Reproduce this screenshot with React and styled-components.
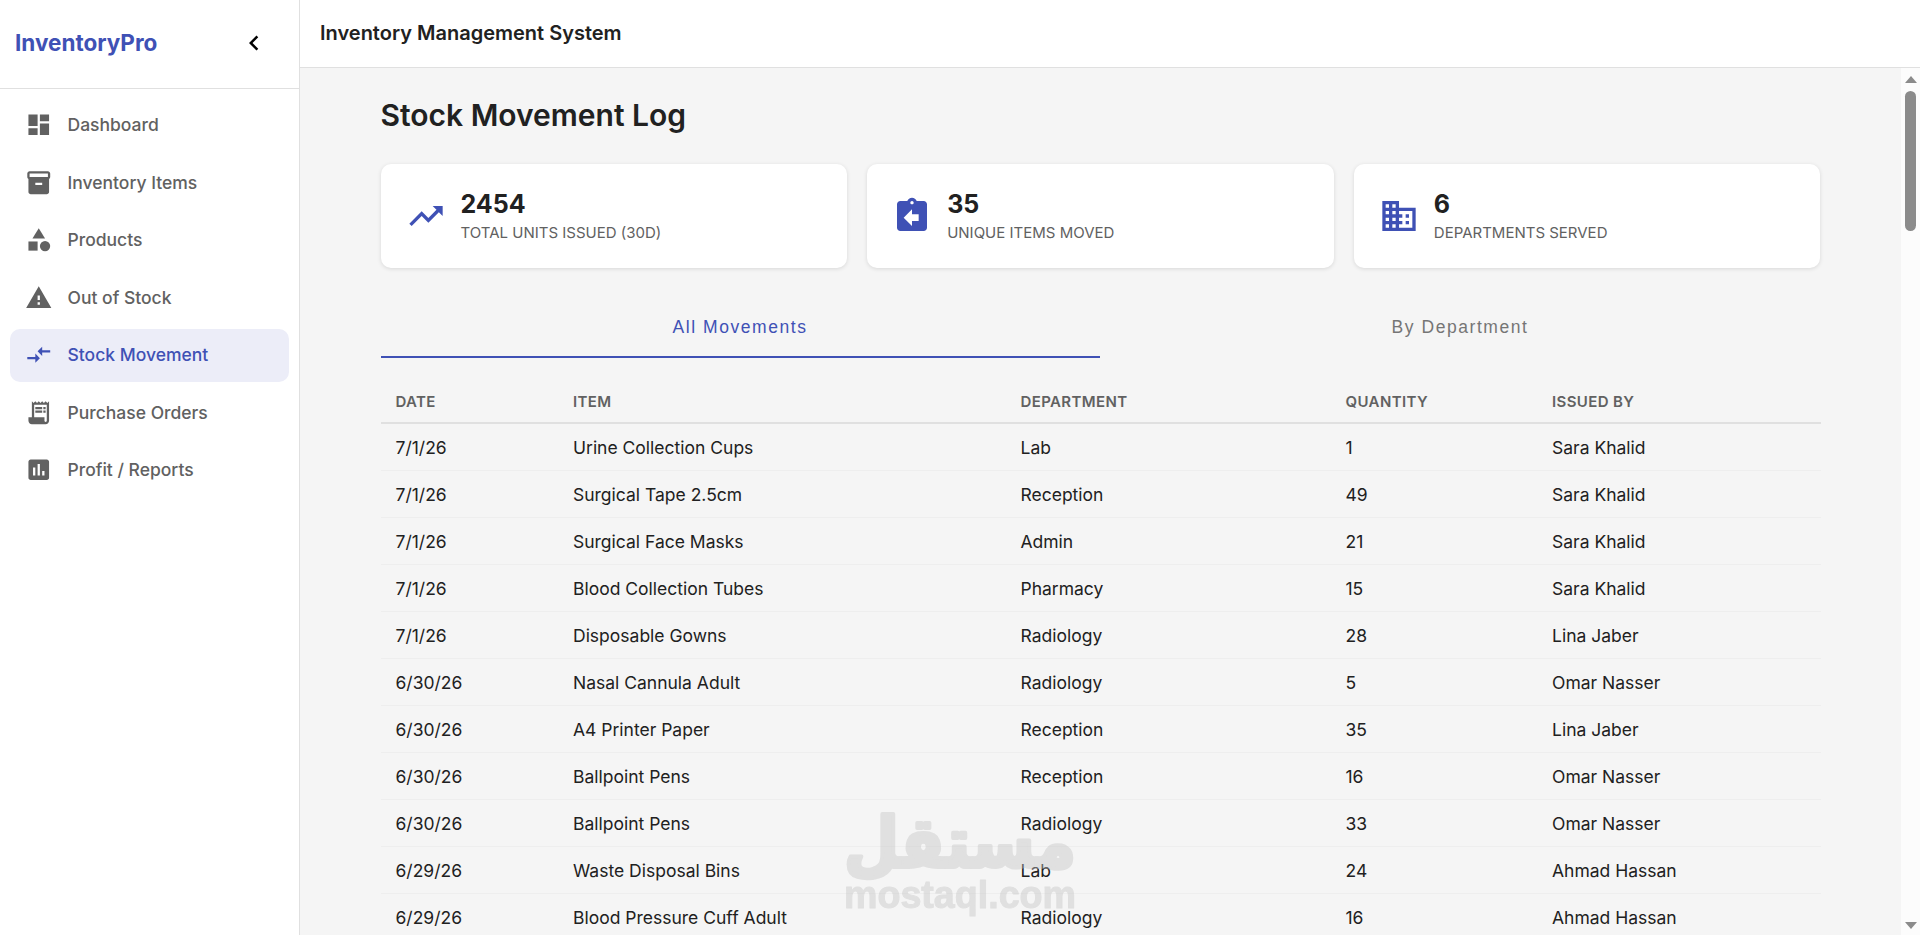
import React, { useState } from 'react';
import styled, { createGlobalStyle } from 'styled-components';
import {
    MdAssessment,
    MdAssignmentReturn,
    MdBusiness,
    MdCategory,
    MdChevronLeft,
    MdCompareArrows,
    MdDashboard,
    MdInventory2,
    MdReceiptLong,
    MdTrendingUp,
    MdWarning,
} from 'react-icons/md';

const GlobalStyle = createGlobalStyle`
    * {
        box-sizing: border-box;
    }
    body {
        margin: 0;
        font-family: Inter, 'Liberation Sans', sans-serif;
        color: #212121;
        background-color: #f5f5f5;
        overflow: hidden;
    }
`

const Layout = styled.div`
    display: flex;
    height: 100vh;
    overflow: hidden;
`

const SideBar = styled.aside`
    flex: 0 0 300px;
    background-color: #fff;
    border-right: 1px solid #e0e0e0;
`

const SideBarHeader = styled.div`
    display: flex;
    align-items: center;
    justify-content: space-between;
    height: 89px;
    padding: 0 30px 3px 15px;
    border-bottom: 1px solid #e0e0e0;
`

const Brand = styled.span`
    font-size: 22.5px;
    font-weight: 700;
    color: #3f51b5;
`

const CollapseButton = styled.button`
    display: flex;
    padding: 0;
    font-size: 30px;
    color: #000;
    background-color: transparent;
    border: none;
`

const Nav = styled.nav`
    display: flex;
    flex-direction: column;
    gap: 5px;
    padding: 10px 10px 0;
`

const NavItem = styled.a`
    display: flex;
    align-items: center;
    gap: 15px;
    height: 52.5px;
    padding: 0 15px 1px;
    border-radius: 10px;
    font-size: 17.5px;
    font-weight: 500;
    color: ${(props) => (props.$active ? '#3f51b5' : '#616161')};
    background-color: ${(props) => (props.$active ? '#ecedf8' : 'transparent')};

    svg {
        font-size: 27.5px;
    }
`

const Main = styled.div`
    flex: 1;
    display: flex;
    flex-direction: column;
    min-width: 0;
`

const TopBar = styled.header`
    flex: 0 0 68px;
    display: flex;
    align-items: center;
    padding: 0 0 2px 20px;
    font-size: 20px;
    font-weight: 600;
    background-color: #fff;
    border-bottom: 1px solid #e0e0e0;
`

const Body = styled.div`
    flex: 1;
    display: flex;
    min-height: 0;
`

const Content = styled.main`
    flex: 1;
    padding: 0 80.5px;
    overflow: hidden;
`

const Title = styled.h1`
    margin: 0;
    padding-top: 29px;
    height: 96px;
    font-size: 30px;
    line-height: 36px;
    font-weight: 600;
`

const Cards = styled.section`
    display: grid;
    grid-template-columns: repeat(3, 1fr);
    gap: 20px;
`

const Card = styled.div`
    display: flex;
    align-items: center;
    gap: 15px;
    height: 104px;
    padding: 0 25px;
    border-radius: 10px;
    background-color: #fff;
    box-shadow: 0 1px 4px rgba(0, 0, 0, 0.12);

    svg {
        font-size: 40px;
        color: #3f51b5;
    }
`

const CardValue = styled.div`
    padding-top: 2px;
    font-size: 25px;
    line-height: 30px;
    font-weight: 700;
`

const CardLabel = styled.div`
    padding-top: 1px;
    font-size: 15px;
    line-height: 26px;
    color: #616161;
    text-transform: uppercase;
`

const Tabs = styled.div`
    display: grid;
    grid-template-columns: 719px 1fr;
    margin-top: 30px;
`

const Tab = styled.button`
    height: 60px;
    padding: 1px 0 0;
    font-family: 'Liberation Sans', Arial, sans-serif;
    font-size: 17.5px;
    letter-spacing: 1.5625px;
    color: ${(props) => (props.$active ? '#3f51b5' : '#757575')};
    background-color: transparent;
    border: none;
    border-bottom: 2px solid ${(props) => (props.$active ? '#3f51b5' : 'transparent')};
`

const Table = styled.table`
    width: 1440px;
    margin-top: 20px;
    table-layout: fixed;
    border-collapse: separate;
    border-spacing: 0;

    th, td {
        padding: 0 15px;
        text-align: left;
    }
    th {
        height: 46px;
        padding-top: 2px;
        font-size: 15px;
        font-weight: 600;
        letter-spacing: .375px;
        color: #616161;
        text-transform: uppercase;
        border-bottom: 2px solid #e0e0e0;
    }
    td {
        height: 47px;
        font-size: 17.5px;
        border-bottom: 1px solid #eee;
    }
`

const Column = styled.col`
    width: ${(props) => props.$width}px;
`

const ScrollTrack = styled.div`
    flex: 0 0 19px;
    display: flex;
    flex-direction: column;
    align-items: center;
    padding: 8px 0 6px;
    background-color: #fcfcfc;
`

const ScrollThumb = styled.div`
    width: 11px;
    height: 140px;
    margin: 8px 0 auto;
    border-radius: 6px;
    background-color: #8b8b8b;
`

const Arrow = styled.div`
    border: 6.5px solid transparent;
    border-top: ${(props) => (props.$up ? '0' : '7px solid #8b8b8b')};
    border-bottom: ${(props) => (props.$up ? '7px solid #8b8b8b' : '0')};
`

const WatermarkBox = styled.svg`
    position: fixed;
    left: 840px;
    top: 800px;
    width: 240px;
    height: 125px;
    overflow: visible;
    opacity: .42;
    pointer-events: none;
    fill: #c3c3c3;
    stroke: #c3c3c3;
    stroke-linejoin: round;
`

const links = [
    { label: 'Dashboard', icon: MdDashboard },
    { label: 'Inventory Items', icon: MdInventory2 },
    { label: 'Products', icon: MdCategory },
    { label: 'Out of Stock', icon: MdWarning },
    { label: 'Stock Movement', icon: MdCompareArrows, active: true },
    { label: 'Purchase Orders', icon: MdReceiptLong },
    { label: 'Profit / Reports', icon: MdAssessment },
]

const stats = [
    { value: 2454, label: 'Total Units Issued (30d)', icon: MdTrendingUp },
    { value: 35, label: 'Unique Items Moved', icon: MdAssignmentReturn },
    { value: 6, label: 'Departments Served', icon: MdBusiness },
]

const columns = [
    { label: 'Date', width: 177.5 },
    { label: 'Item', width: 447.5 },
    { label: 'Department', width: 325 },
    { label: 'Quantity', width: 206.5 },
    { label: 'Issued By', width: 283.5 },
]

const movements = [
    ['7/1/26', 'Urine Collection Cups', 'Lab', 1, 'Sara Khalid'],
    ['7/1/26', 'Surgical Tape 2.5cm', 'Reception', 49, 'Sara Khalid'],
    ['7/1/26', 'Surgical Face Masks', 'Admin', 21, 'Sara Khalid'],
    ['7/1/26', 'Blood Collection Tubes', 'Pharmacy', 15, 'Sara Khalid'],
    ['7/1/26', 'Disposable Gowns', 'Radiology', 28, 'Lina Jaber'],
    ['6/30/26', 'Nasal Cannula Adult', 'Radiology', 5, 'Omar Nasser'],
    ['6/30/26', 'A4 Printer Paper', 'Reception', 35, 'Lina Jaber'],
    ['6/30/26', 'Ballpoint Pens', 'Reception', 16, 'Omar Nasser'],
    ['6/30/26', 'Ballpoint Pens', 'Radiology', 33, 'Omar Nasser'],
    ['6/29/26', 'Waste Disposal Bins', 'Lab', 24, 'Ahmad Hassan'],
    ['6/29/26', 'Blood Pressure Cuff Adult', 'Radiology', 16, 'Ahmad Hassan'],
]

const Watermark = () => (
    <WatermarkBox viewBox="0 0 240 125">
        <text x="120" y="67" textAnchor="middle" direction="rtl" textLength="232" lengthAdjust="spacingAndGlyphs"
            fontFamily="DejaVu Sans" fontWeight="700" fontSize="70" strokeWidth="4">مستقل</text>
        <text x="4" y="108" textLength="232" lengthAdjust="spacingAndGlyphs"
            fontFamily="Liberation Sans" fontWeight="700" fontSize="38" strokeWidth="1">mostaql.com</text>
    </WatermarkBox>
)

const App = () => {
    const [tab, setTab] = useState('All Movements')
    return (
        <Layout>
            <GlobalStyle />
            <SideBar>
                <SideBarHeader>
                    <Brand>InventoryPro</Brand>
                    <CollapseButton><MdChevronLeft /></CollapseButton>
                </SideBarHeader>
                <Nav>
                    {links.map(({ label, icon: Icon, active }) => (
                        <NavItem key={label} $active={active}><Icon />{label}</NavItem>
                    ))}
                </Nav>
            </SideBar>
            <Main>
                <TopBar>Inventory Management System</TopBar>
                <Body>
                    <Content>
                        <Title>Stock Movement Log</Title>
                        <Cards>
                            {stats.map(({ value, label, icon: Icon }) => (
                                <Card key={label}>
                                    <Icon />
                                    <div>
                                        <CardValue>{value}</CardValue>
                                        <CardLabel>{label}</CardLabel>
                                    </div>
                                </Card>
                            ))}
                        </Cards>
                        <Tabs>
                            {['All Movements', 'By Department'].map((name) => (
                                <Tab key={name} $active={tab === name} onClick={() => setTab(name)}>{name}</Tab>
                            ))}
                        </Tabs>
                        <Table>
                            <colgroup>
                                {columns.map(({ label, width }) => <Column key={label} $width={width} />)}
                            </colgroup>
                            <thead>
                                <tr>{columns.map(({ label }) => <th key={label}>{label}</th>)}</tr>
                            </thead>
                            <tbody>
                                {movements.map((row, i) => (
                                    <tr key={i}>{row.map((cell, j) => <td key={j}>{cell}</td>)}</tr>
                                ))}
                            </tbody>
                        </Table>
                    </Content>
                    <ScrollTrack>
                        <Arrow $up />
                        <ScrollThumb />
                        <Arrow />
                    </ScrollTrack>
                </Body>
            </Main>
            <Watermark />
        </Layout>
    )
}

export default App;
